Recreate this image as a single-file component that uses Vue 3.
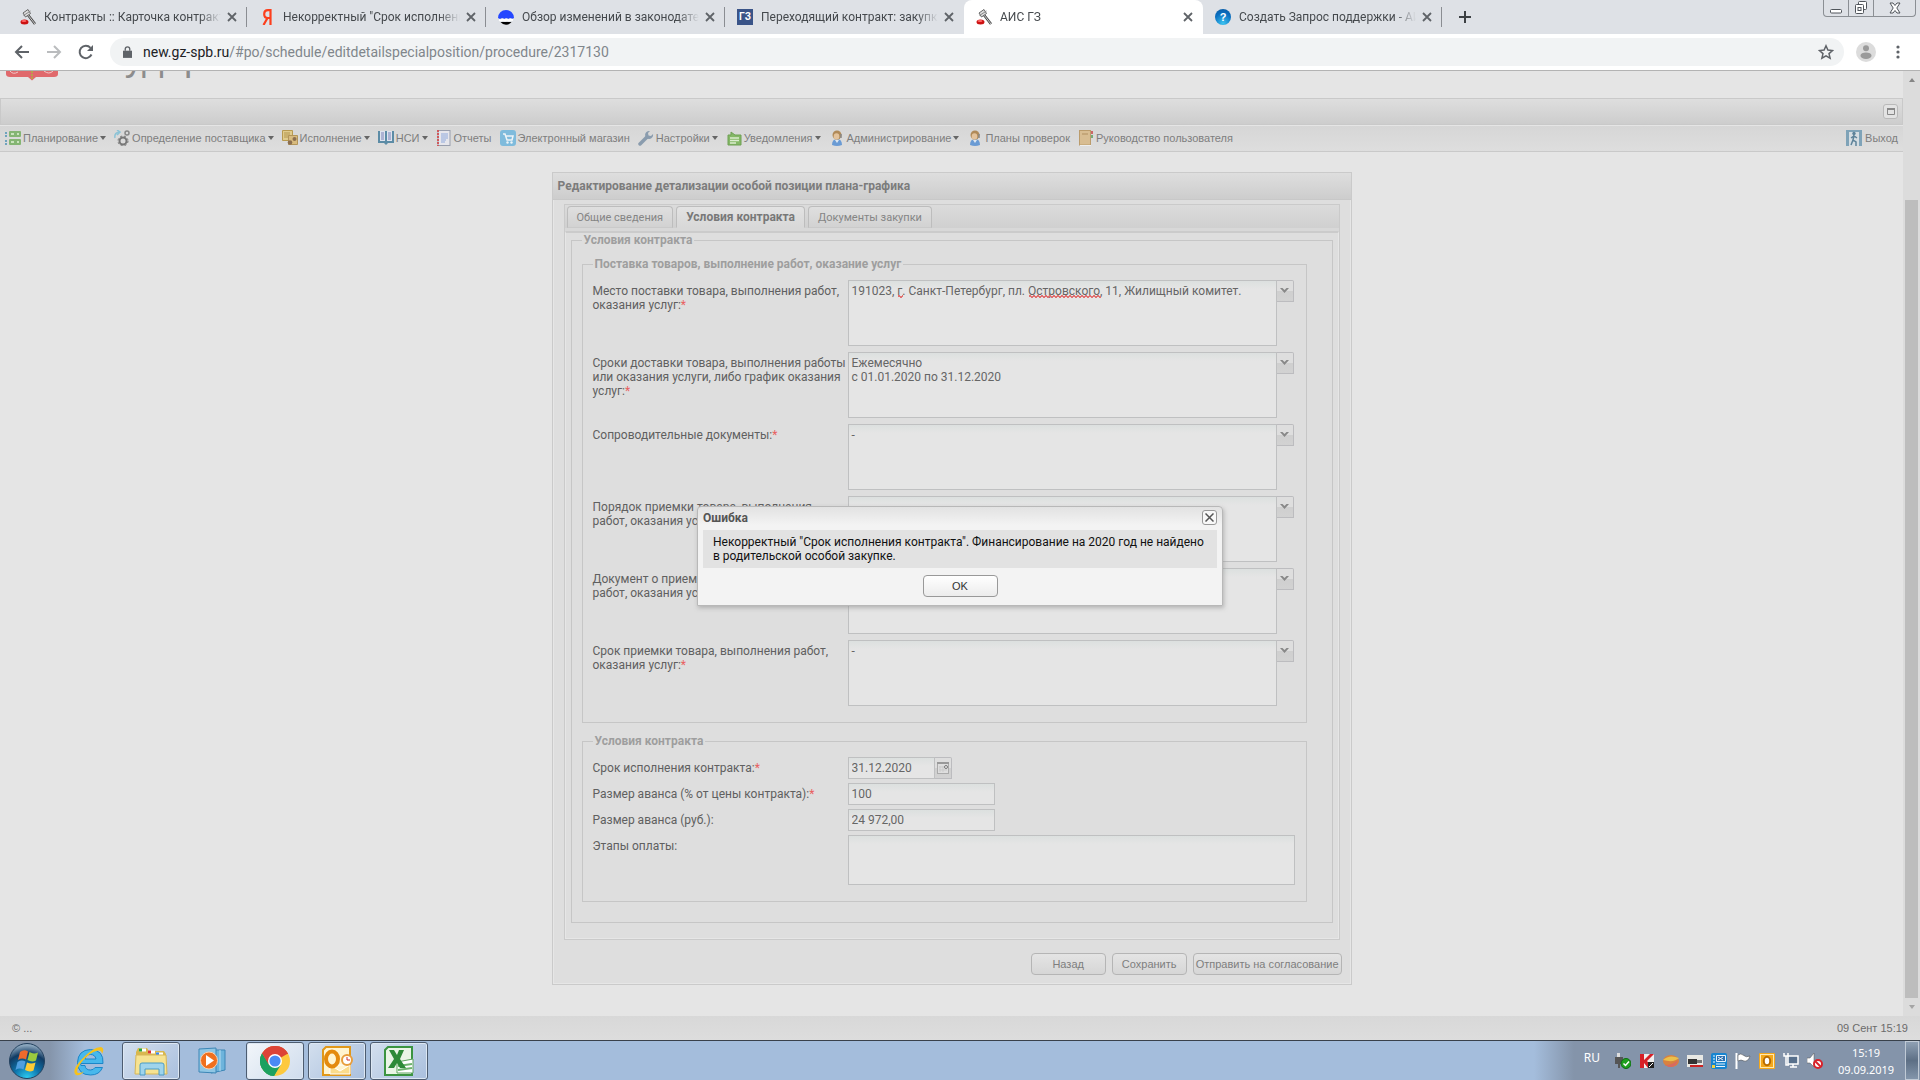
<script setup>
import { ref, onMounted } from 'vue'

const browserTabs = [
  { icon: 'gavel', title: 'Контракты :: Карточка контракта' },
  { icon: 'yandex', title: 'Некорректный "Срок исполнени' },
  { icon: 'globe', title: 'Обзор изменений в законодате' },
  { icon: 'gz', title: 'Переходящий контракт: закупки' },
  { icon: 'gavel', title: 'АИС ГЗ', active: true },
  { icon: 'help', title: 'Создать Запрос поддержки - АИ' },
]

const menu = [
  { icon: 'plan', text: 'Планирование', drop: true },
  { icon: 'gears', text: 'Определение поставщика', drop: true },
  { icon: 'exec', text: 'Исполнение', drop: true },
  { icon: 'book', text: 'НСИ', drop: true },
  { icon: 'report', text: 'Отчеты' },
  { icon: 'shop', text: 'Электронный магазин' },
  { icon: 'wrench', text: 'Настройки', drop: true },
  { icon: 'notify', text: 'Уведомления', drop: true },
  { icon: 'user', text: 'Администрирование', drop: true },
  { icon: 'user', text: 'Планы проверок' },
  { icon: 'manual', text: 'Руководство пользователя' },
]

const delivery = ref([
  { label: 'Место поставки товара, выполнения работ,\nоказания услуг:', value: '191023, г. Санкт-Петербург, пл. Островского, 11, Жилищный комитет.', typos: ['г', 'Островского'] },
  { label: 'Сроки доставки товара, выполнения работы\nили оказания услуги, либо график оказания\nуслуг:', value: 'Ежемесячно\nс 01.01.2020 по 31.12.2020' },
  { label: 'Сопроводительные документы:', value: '-' },
  { label: 'Порядок приемки товара, выполнения\nработ, оказания услуг:', value: '-' },
  { label: 'Документ о приемке товара, выполнения\nработ, оказания услуг:', value: '-' },
  { label: 'Срок приемки товара, выполнения работ,\nоказания услуг:', value: '-' },
])

const endDate = ref('31.12.2020')
const percent = ref('100')
const amount = ref('24 972,00')
const stages = ref('')

const typoMarks = ref([])
onMounted(() => {
  const area = document.getElementById('delivery-0')
  const ctx = document.createElement('canvas').getContext('2d')
  const style = getComputedStyle(area)
  ctx.font = `${style.fontSize} ${style.fontFamily}`
  const { value, typos } = delivery.value[0]
  typoMarks.value = typos.map((word) => ({
    left: 4 + Math.round(ctx.measureText(value.slice(0, value.indexOf(word))).width),
    width: Math.round(ctx.measureText(word).width),
  }))
})
</script>

<template>
  <div class="screen">
    <header class="chrome">
      <div class="tabstrip">
        <div v-for="(t, i) in browserTabs" :key="i" class="btab" :class="{ active: t.active, plain: i === 3 || i === 4 }">
          <svg v-if="t.icon === 'gavel'" class="i16" viewBox="0 0 16 16">
            <path d="M8 6l7 9" stroke="#444" stroke-width="2.500" />
            <path d="M8 6l7 9" stroke="#ccc" />
            <path d="M3 4l5-3.500 2.500 4L5.500 8z" fill="#ddd" stroke="#666" />
            <path d="M3.500 6.500l7-4.500" stroke="#888" />
            <ellipse cx="4.500" cy="13" rx="4" ry="2.500" fill="#c11" />
            <ellipse cx="4" cy="12" rx="2.500" ry="1" fill="#f66" />
          </svg>
          <svg v-else-if="t.icon === 'yandex'" class="i16" viewBox="0 0 16 16">
            <path d="M11.500 0v16M11.500 1.200H9C6.500 1.200 5.200 3 5.200 5.200S6.800 9 9 9h2.500M8.500 9L4.500 16" fill="none" stroke="#fc3f1d" stroke-width="2.200" />
          </svg>
          <svg v-else-if="t.icon === 'globe'" class="i16" viewBox="0 0 16 16">
            <path d="M0 9a8 8 0 1 1 16 0l-2 1-2-1-2 1-2-1-2 1-2-1-2 1z" fill="#2447ff" />
            <path d="M1 11l2 .5 2-1 2 1 2-1 2 1 2-1 2 .5" stroke="#fff" stroke-width="2" fill="none" />
            <path d="M2.500 13h11a7 7 0 0 1-11 0z" fill="#000" />
          </svg>
          <span v-else-if="t.icon === 'gz'" class="gz" aria-hidden="true">ГЗ</span>
          <span v-else class="help" aria-hidden="true">?</span>
          <span class="btitle">{{ t.title }}</span>
          <button class="bclose" aria-label="Закрыть вкладку">
            <svg viewBox="0 0 10 10"><path d="M1 1l8 8M9 1L1 9" stroke="#5f6368" stroke-width="1.800" /></svg>
          </button>
        </div>
        <button class="newtab" aria-label="Новая вкладка">
          <svg viewBox="0 0 12 12"><path d="M6 0v12M0 6h12" stroke="#3c4043" stroke-width="2" /></svg>
        </button>
        <div class="winctl">
          <button aria-label="Свернуть"><svg width="14" height="14" viewBox="0 0 14 14"><rect x="1.500" y="8.500" width="11" height="3.500" rx="1" fill="#fff" stroke="#50555b" /></svg></button>
          <button aria-label="Восстановить"><svg width="14" height="14" viewBox="0 0 14 14"><rect x="4.500" y=".5" width="8" height="8" rx="1" fill="#fff" stroke="#50555b" /><rect x="1.500" y="3.500" width="8" height="9" rx="1" fill="#fff" stroke="#50555b" /><rect x="4" y="6.500" width="3" height="3" fill="#fff" stroke="#50555b" /></svg></button>
          <button aria-label="Закрыть"><svg width="14" height="12" viewBox="0 0 14 12"><path d="M2 1h3l2 2.500L9 1h3L8.800 6 12 11H9L7 8.500 5 11H2l3.200-5z" fill="#fff" stroke="#50555b" /></svg></button>
        </div>
      </div>
      <div class="toolbar">
        <button class="nav" aria-label="Назад по истории"><svg viewBox="0 0 16 16"><path d="M15 8H2M8 2L2 8l6 6" fill="none" stroke="#5f6368" stroke-width="2" /></svg></button>
        <button class="nav" aria-label="Вперед"><svg viewBox="0 0 16 16"><path d="M1 8h13M8 2l6 6-6 6" fill="none" stroke="#babcbe" stroke-width="2" /></svg></button>
        <button class="nav" aria-label="Обновить"><svg viewBox="0 0 16 16"><path d="M13.500 10.500A6.200 6.200 0 1 1 12.500 3.800" fill="none" stroke="#5f6368" stroke-width="2" /><path d="M15 1v6H9z" fill="#5f6368" /></svg></button>
        <div class="omni">
          <svg class="lock" viewBox="0 0 10 14"><path d="M0 5h10v8H0z" fill="#5f6368" /><path d="M2.500 5V3.200a2.500 2.500 0 0 1 5 0V5" fill="none" stroke="#5f6368" stroke-width="1.500" /></svg>
          <span class="url"><b>new.gz-spb.ru</b>/#po/schedule/editdetailspecialposition/procedure/2317130</span>
          <svg class="star" viewBox="0 0 16 16"><path d="M8 1.800l1.900 4.300 4.600.4-3.500 3.100 1.100 4.600L8 11.800l-4.100 2.400L5 9.600 1.500 6.500l4.600-.4z" fill="none" stroke="#5f6368" stroke-width="1.500" /></svg>
        </div>
        <svg class="avatar" viewBox="0 0 20 20"><circle cx="10" cy="10" r="10" fill="#dcdcdc" /><circle cx="10" cy="6.300" r="3" fill="#9a9a9a" /><ellipse cx="10" cy="13.700" rx="5.500" ry="3.300" fill="#9a9a9a" /></svg>
        <svg class="dots" viewBox="0 0 4 14"><circle cx="2" cy="2" r="1.600" /><circle cx="2" cy="7" r="1.600" /><circle cx="2" cy="12" r="1.600" /></svg>
      </div>
    </header>

    <div class="content">
      <div class="viewport">
        <div class="page">
          <div class="brand">
            <svg width="52" height="10" viewBox="0 0 52 10"><path d="M0 0h52v3q0 3-4 3H30l-4 3.500L22 6H4Q0 6 0 3z" fill="#e0696c" /><path d="M4 0q3 4 8 1M38 0q5 4 9 0" stroke="#f2c9c9" fill="none" /><path d="M26 0v8" stroke="#b9a24a" stroke-width="2" stroke-dasharray="2 1" /></svg>
            <h1>Государственный заказ</h1>
          </div>
          <div class="north">
            <button aria-label="Развернуть"><svg width="8" height="7" viewBox="0 0 8 7"><path d="M.5.5h7v6h-7z" fill="none" stroke="#888" /><path d="M0 1h8" stroke="#888" stroke-width="2" /></svg></button>
          </div>
          <nav class="menubar">
            <button v-for="m in menu" :key="m.text" class="mitem">
              <svg class="i16" viewBox="0 0 16 16">
                <g v-if="m.icon === 'plan'"><rect x="4" y="1" width="12" height="6" rx="1" fill="#84b573" /><rect x="4" y="9" width="12" height="6" rx="1" fill="#84b573" /><path d="M6 4h3M12 4h2M6 12h3M12 12h2" stroke="#c9e3bd" stroke-width="2" /><path d="M0 3h2M0 6h2M0 11h2M0 14h2" stroke="#6fa3bd" stroke-width="2" /></g>
                <g v-else-if="m.icon === 'gears'" fill="none"><circle cx="9" cy="11" r="3.500" stroke="#777" stroke-width="2" /><circle cx="9" cy="11" r="5" stroke="#777" stroke-dasharray="2 2" /><circle cx="13" cy="3" r="2" stroke="#888" stroke-width="1.500" /><path d="M1 8Q0 3 5 2M3 0l3 2-3 3" stroke="#8cc3d6" stroke-width="1.500" /></g>
                <g v-else-if="m.icon === 'exec'"><path d="M.5.5h10v10H.5z" fill="#e0cb8c" stroke="#b89a50" /><path d="M2 3h6M2 5h6M2 7h4" stroke="#b3954c" /><path d="M6.500 5.500h9v9h-9z" fill="#d8bb7e" stroke="#b3955a" /><circle cx="8" cy="12.500" r="2.300" fill="#8c6f50" /><circle cx="12.500" cy="9" r="2" fill="#8c6f50" /></g>
                <g v-else-if="m.icon === 'book'"><path d="M0 1h16v12H10L8 15 6 13H0z" fill="#5c8ca6" /><path d="M2 1h5v10H2zM9 1h5v10H9z" fill="#dfe3ee" /><path d="M3 3h3M3 5h3M3 7h3M3 9h3M10 3h3M10 5h3M10 7h3M10 9h3" stroke="#7a82b8" /></g>
                <g v-else-if="m.icon === 'report'"><rect x="2" y=".5" width="12" height="15" fill="#e6e6ec" stroke="#999fae" /><path d="M2 0v16" stroke="#d0595c" stroke-width="2" stroke-dasharray="2 1" /><path d="M5 4h7M5 6h7M5 8h7M5 10h5M5 12h4" stroke="#8fa9dc" /></g>
                <g v-else-if="m.icon === 'shop'"><rect width="16" height="16" rx="3" fill="#7fbbdc" /><path d="M3 4h2l2 6h5l1-4H6" fill="none" stroke="#eef4f7" stroke-width="1.500" /><circle cx="7.500" cy="12.500" r="1.200" fill="#eef4f7" /><circle cx="11.500" cy="12.500" r="1.200" fill="#eef4f7" /></g>
                <g v-else-if="m.icon === 'wrench'"><path d="M2 14L9 7" stroke="#8a9cae" stroke-width="3.500" stroke-linecap="round" /><path d="M12 1a4 4 0 1 0 3 3l-2 2-2.500-.5L10 3z" fill="#8a9cae" /></g>
                <g v-else-if="m.icon === 'notify'"><path d="M2 5h3V2l4 3h6v10H2z" fill="#84b866" stroke="#6fa055" /><path d="M4 8h9M4 10.500h9M4 13h6" stroke="#dcecd0" stroke-width="1.300" /></g>
                <g v-else-if="m.icon === 'user'"><path d="M3 15q0-6 5-6t5 6q-5 2-10 0z" fill="#6a9bd4" /><path d="M6 10l2 3 2-3z" fill="#dfe8f2" /><circle cx="8" cy="5" r="4.500" fill="#b08a58" /><ellipse cx="7.500" cy="6.500" rx="2.800" ry="3.200" fill="#e3c39c" /><path d="M12 4v4" stroke="#888" stroke-width="1.500" /></g>
                <g v-else><rect x="1.500" y=".5" width="11" height="14.500" fill="#d8bd92" stroke="#bb9c6c" /><path d="M4 4h6" stroke="#b08f60" /><path d="M2 15.500h11" stroke="#eee" /><path d="M14 1v3" stroke="#c66" stroke-width="2" /><path d="M14 5v3" stroke="#7a7" stroke-width="2" /></g>
              </svg>
              <span>{{ m.text }}</span>
              <i v-if="m.drop" class="caret"></i>
            </button>
            <button class="mitem exit">
              <svg class="i16" viewBox="0 0 16 16"><rect width="16" height="16" fill="#7fa3b8" /><path d="M3 2h10v14H3z" fill="#d5dde2" /><circle cx="8" cy="3.500" r="1.700" fill="#5d8299" /><path d="M8 5L7 10l3 2v4M7 10l-2 5M5 8l3-2 3 2" stroke="#5d8299" stroke-width="1.500" fill="none" /></svg>
              <span>Выход</span>
            </button>
          </nav>

          <main class="panel">
            <h2>Редактирование детализации особой позиции плана-графика</h2>
            <form class="pbody" @submit.prevent>
              <div class="frame">
                <div class="tabs" role="tablist">
                  <button type="button" role="tab">Общие сведения</button>
                  <button type="button" role="tab" class="on">Условия контракта</button>
                  <button type="button" role="tab">Документы закупки</button>
                </div>
                <div class="fbody">
                  <fieldset class="outer">
                    <legend>Условия контракта</legend>
                    <fieldset class="inner">
                      <legend>Поставка товаров, выполнение работ, оказание услуг</legend>
                      <div v-for="(f, i) in delivery" :key="i" class="row">
                        <label :for="'delivery-' + i">{{ f.label }}<em>*</em></label>
                        <div class="combo">
                          <textarea :id="'delivery-' + i" v-model="f.value" spellcheck="false"></textarea>
                          <template v-if="f.typos">
                            <i v-for="(m, k) in typoMarks" :key="k" class="typo" :style="{ left: m.left + 'px', width: m.width + 'px' }"></i>
                          </template>
                          <button type="button" class="trigger" aria-label="Выбрать"><svg width="9" height="6" viewBox="0 0 9 6"><path d="M0 0h2.500l2 2 2-2H9L4.500 5z" fill="#888" /></svg></button>
                        </div>
                      </div>
                    </fieldset>
                    <fieldset class="inner second">
                      <legend>Условия контракта</legend>
                      <div class="row">
                        <label for="end-date">Срок исполнения контракта:<em>*</em></label>
                        <div class="combo date">
                          <input id="end-date" v-model="endDate" type="text">
                          <button type="button" class="trigger" aria-label="Календарь"><svg width="12" height="12" viewBox="0 0 12 12"><rect x=".5" y=".5" width="11" height="11" fill="#dedede" stroke="#aaa" /><path d="M0 1h12" stroke="#999" stroke-width="2" /><path d="M3 4v6M6 4v6M2 5h6M2 8h8" stroke="#cbcbcb" /><circle cx="9" cy="5" r="1.500" fill="#eee" stroke="#777" /></svg></button>
                        </div>
                      </div>
                      <div class="row">
                        <label for="percent">Размер аванса (% от цены контракта):<em>*</em></label>
                        <input id="percent" v-model="percent" class="short" type="text">
                      </div>
                      <div class="row">
                        <label for="amount">Размер аванса (руб.):</label>
                        <input id="amount" v-model="amount" class="short" type="text">
                      </div>
                      <div class="row">
                        <label for="stages">Этапы оплаты:</label>
                        <textarea id="stages" v-model="stages" class="stages"></textarea>
                      </div>
                    </fieldset>
                  </fieldset>
                </div>
              </div>
              <div class="actions">
                <button type="button">Назад</button>
                <button type="button">Сохранить</button>
                <button type="button">Отправить на согласование</button>
              </div>
            </form>
          </main>
        </div>
        <div class="scroll" aria-hidden="true"><i class="up"></i><span class="thumb"></span><i class="down"></i></div>
      </div>

      <footer class="status"><span>© ...</span><span>09 Сент 15:19</span></footer>

      <section class="dialog" role="alertdialog" aria-labelledby="dlg-title">
        <div class="dhead">
          <h3 id="dlg-title">Ошибка</h3>
          <button aria-label="Закрыть окно"><svg width="9" height="9" viewBox="0 0 9 9"><path d="M.5.5l8 8M8.500.5l-8 8" stroke="#555" stroke-width="1.500" /></svg></button>
        </div>
        <p>Некорректный "Срок исполнения контракта". Финансирование на 2020 год не найдено<br>в родительской особой закупке.</p>
        <button class="ok">OK</button>
      </section>
    </div>

    <div class="taskbar">
      <button class="orb" aria-label="Пуск">
        <svg width="36" height="36" viewBox="0 0 36 36">
          <defs><radialGradient id="orbfill" cx=".5" cy="1" r=".95"><stop offset="0" stop-color="#2fd0f5" /><stop offset=".4" stop-color="#0d74ab" /><stop offset=".75" stop-color="#123b63" /><stop offset="1" stop-color="#8ba6bd" /></radialGradient></defs>
          <circle cx="18" cy="18" r="17.500" fill="url(#orbfill)" stroke="#24425f" />
          <path d="M11 9q4-3 8-.5l-2 8q-4-2-8 .5z" fill="#ee6a2c" /><path d="M20.500 9q4 2.500 8.500.5l-2 8q-4 2-8.500-.5z" fill="#9bca3e" /><path d="M8.500 19q4-2.500 8-.5l-2 8q-4-2-8 .5z" fill="#4f9fe0" /><path d="M18 19.500q4 2 8.500 0l-2 8q-4 2-8.500-.5z" fill="#fccb35" />
        </svg>
      </button>
      <button class="task" aria-label="Internet Explorer">
        <svg width="32" height="32" viewBox="0 0 32 32"><path d="M7.500 18.500H30Q31 5 17.500 4.500 5 5 4.500 17.500 5 30 17.500 30 26.500 30 29.500 22.500H22q-1.500 2.500-4.500 2.500-5 0-5.500-4.500H8zM12 14q1-4.500 5.500-4.500T23 14z" fill="#48b8ec" stroke="#1c86c8" fill-rule="evenodd" /><path d="M3 30Q-2 26 8 15 20 2 28 2q4 1 1 7 0-4-4-3.500Q17 7 9 16.500 2 26 5 28q2 .5 6-1.500-5 5-8 3.500z" fill="#f6c21c" /></svg>
      </button>
      <button class="task open" aria-label="Проводник">
        <svg width="34" height="32" viewBox="0 0 34 32"><path d="M2 7l2-4h9l2 3h15l2 3v20H2z" fill="#d9b84e" /><path d="M5 5h7M14 7h7M22 9h7" stroke="#fff" stroke-width="3" /><path d="M5 5h3" stroke="#2ca53c" stroke-width="3" /><path d="M14 7h3" stroke="#d33" stroke-width="3" /><path d="M22 9h3" stroke="#38f" stroke-width="3" /><path d="M2 10h30l1 19H1z" fill="#f6e392" stroke="#d6b658" /><path d="M6 30V20q0-2 2-2h20q2 0 2 2v10h-5v-6H11v6z" fill="#9fd4ec" stroke="#4b9cc6" /></svg>
      </button>
      <button class="task" aria-label="Проигрыватель">
        <svg width="32" height="28" viewBox="0 0 32 28"><path d="M14 3h14v20l-14 3z" fill="#6eb4dc" stroke="#3c86b6" /><path d="M18 3v22M23 3v21" stroke="#b9def0" /><path d="M2 2l17-1v25L2 25z" fill="#8fc6e4" stroke="#3c86b6" /><circle cx="12" cy="13.500" r="8.500" fill="#f0701e" stroke="#fbd0ae" /><path d="M9 8l8 5.500L9 19z" fill="#fff" /></svg>
      </button>
      <button class="task open current" aria-label="Chrome">
        <svg width="30" height="30" viewBox="0 0 30 30"><circle cx="15" cy="15" r="15" fill="#fdc93e" /><path d="M15 15L2 7.500A15 15 0 0 1 28 7.500z" fill="#dc4437" /><path d="M2 7.500A15 15 0 0 0 14 30L21 18.500 15 22 9 18.500z" fill="#1da160" /><path d="M15 8h13q-4-8-13-8Q7 0 2 7.500l6.500 11z" fill="#dc4437" /><path d="M2 7.500L8.500 18.500 14 21l5-1-5 10A15 15 0 0 1 2 7.500z" fill="#1da160" /><circle cx="15" cy="15" r="7" fill="#fff" /><circle cx="15" cy="15" r="5.600" fill="#4a8af4" /></svg>
      </button>
      <button class="task open" aria-label="Outlook">
        <svg width="32" height="32" viewBox="0 0 32 32"><path d="M5 2h24v28H2V5z" fill="#fff4d0" stroke="#e0981a" stroke-width="2" /><path d="M9 20h20v9H9zM9 20l10 6 10-6" fill="#fbdc8c" stroke="#fff" /><ellipse cx="11" cy="14" rx="6" ry="7.500" fill="none" stroke="#e48a0e" stroke-width="4" /><circle cx="26" cy="15" r="5" fill="#fff" stroke="#e89d3c" stroke-width="2" /><path d="M26 12v3h3" fill="none" stroke="#c33" /></svg>
      </button>
      <button class="task open" aria-label="Excel">
        <svg width="32" height="32" viewBox="0 0 32 32"><path d="M5 2h24v28H2V5z" fill="#eaf5e6" stroke="#3b9440" stroke-width="2" /><path d="M14 17l16-3v14H14z" fill="#fff" stroke="#5ca35c" /><path d="M15 21l14-2M15 25l14-2" stroke="#6db36d" stroke-width="2" /><path d="M6 5h5l3 5 2-5h5l-4 9 6 9h-6l-3-5-3 5H5l6-9z" fill="#2e8a38" /></svg>
      </button>
      <div class="tray">
        <span class="lang">RU</span>
        <div class="ticons">
          <svg viewBox="0 0 16 16"><path d="M2 0h3v4H2z" fill="#ddd" /><path d="M0 4h8v7H5v4H3v-4H0z" fill="#555" /><circle cx="11" cy="10.500" r="5" fill="#1fa01f" stroke="#0d6d12" /><path d="M8.500 10.500l2 2 3.500-4" stroke="#fff" stroke-width="1.500" fill="none" /></svg>
          <svg viewBox="0 0 16 16"><path d="M1 1h14v14H1z" fill="#eee" /><path d="M1 1h4v6l6-6h4L8 8l6 7H9L5 10v5H1z" fill="#d61f26" /><path d="M9 9h6v6H9z" fill="#222" /><path d="M10 14l4-4" stroke="#fff" /></svg>
          <svg viewBox="0 0 16 16"><ellipse cx="8" cy="8" rx="8" ry="6" fill="#d9823f" /><path d="M0 7q6-6 16-2-5 5-16 2z" fill="#eac04c" /><path d="M2 12q8 0 13-5-2 8-9 7z" fill="#d86a60" /></svg>
          <svg viewBox="0 0 16 16"><path d="M0 2h16v12H0z" fill="#e8e8e4" /><path d="M1 6h9v5H1z" fill="#333" /><path d="M10 7h5v3h-5z" fill="#777" /><path d="M3 13h13" stroke="#c22" stroke-width="2" /></svg>
          <svg viewBox="0 0 16 16"><rect width="16" height="16" rx="2" fill="#1785d0" /><path d="M5.500 2.500h9v6h-9z" fill="#2d6fae" stroke="#eaf5fc" /><path d="M7 4l5 3M12 4L7 7M2 3h2M2 6h2M2 9h2M5 11h9M5 13.500h9" stroke="#eaf5fc" /><path d="M1 12h3v3H1z" fill="#f0d040" /></svg>
          <svg viewBox="0 0 16 16"><path d="M1.500 0v16" stroke="#fff" stroke-width="2" /><path d="M3 2q3-2 5 0 3 3 7 1-2 6-6 5-3-2-6 0z" fill="#fff" stroke="#444" stroke-width=".5" /></svg>
          <svg viewBox="0 0 16 16"><rect width="16" height="16" rx="1" fill="#f4a81c" /><rect x="1.500" y="1.500" width="13" height="13" fill="none" stroke="#ffe9b0" /><ellipse cx="8" cy="8" rx="3.200" ry="4.200" fill="#fff" stroke="#b86c00" stroke-width="2" /></svg>
          <svg viewBox="0 0 16 16"><path d="M5 3h10v8H5z" fill="#58708c" stroke="#fff" stroke-width="1.500" /><path d="M7 14h7M10 11v3" stroke="#fff" stroke-width="1.500" /><path d="M1 0v3h4V0M3 3v9h3" stroke="#fff" stroke-width="1.500" fill="none" /></svg>
          <svg viewBox="0 0 16 16"><path d="M0 5h3l4-5v14L3 10H0z" fill="#fff" stroke="#555" stroke-width=".5" /><circle cx="11" cy="11" r="4" fill="#fff" stroke="#d8222a" stroke-width="2" /><path d="M8 8l6 6" stroke="#d8222a" stroke-width="2" /></svg>
        </div>
        <div class="clock"><span>15:19</span><span>09.09.2019</span></div>
        <button class="peek" aria-label="Показать рабочий стол"></button>
      </div>
    </div>
  </div>
</template>

<style>
body { margin: 0; background: #e5e5e5; }
</style>

<style scoped>
* { box-sizing: border-box; }
button { font: inherit; color: inherit; margin: 0; padding: 0; border: 0; background: none; display: flex; align-items: center; justify-content: center; white-space: nowrap; }
h1, h2, h3, p { margin: 0; }
.screen { display: flex; flex-direction: column; min-height: 100vh; overflow: hidden; font-family: Roboto, sans-serif; font-size: 12px; }
.i16 { width: 16px; height: 16px; flex: none; }

.chrome { background: #dee1e6; }
.tabstrip { display: flex; height: 34px; padding-left: 8px; align-items: stretch; color: #45494d; }
.btab { display: flex; align-items: center; width: 239px; padding: 0 10px 0 12px; background: linear-gradient(#8a8d92, #8a8d92) right 7px / 1px 20px no-repeat; }
.btab.plain { background-image: none; }
.btab.active { background: #fff; border-radius: 8px 8px 0 0; }
.btitle { flex: 1; margin: 0 6px 0 8px; overflow: hidden; white-space: nowrap; mask-image: linear-gradient(to right, #000 88%, transparent); }
.bclose svg { width: 10px; height: 10px; }
.bclose { width: 10px; }
.gz { width: 16px; height: 16px; background: #3a5488; color: #fff; font: bold 10px/16px "Liberation Sans", sans-serif; text-align: center; }
.help { width: 16px; height: 16px; border-radius: 50%; background: radial-gradient(circle at 50% 90%, #3cc3f0, #0a6fc0 60%, #0a58a0); color: #fff; font: bold 11px/16px "Liberation Sans", sans-serif; text-align: center; }
.newtab { margin-left: 17px; width: 12px; }
.newtab svg { width: 12px; height: 12px; }
.winctl { display: flex; margin-left: auto; margin-right: 4px; height: 17px; border: 1px solid #8b8f94; border-top: 0; border-radius: 0 0 4px 4px; }
.winctl button { width: 25px; border-right: 1px solid #8b8f94; }
.winctl button:last-child { width: 41px; border: 0; }
.toolbar { display: flex; align-items: center; height: 37px; padding: 0 20px 0 14px; background: #fff; border-bottom: 1px solid #b3b3b3; }
.nav { width: 16px; height: 16px; margin-right: 16px; }
.nav svg { width: 16px; height: 16px; }
.omni { flex: 1; display: flex; align-items: center; height: 28px; margin-right: 12px; padding: 0 10px 0 13px; border-radius: 14px; background: #f1f3f4; font-size: 14px; color: #80868b; }
.omni b { font-weight: 400; color: #202124; }
.lock { width: 9px; height: 13px; margin-right: 11px; }
.url { flex: 1; }
.star { width: 16px; height: 16px; }
.avatar { width: 20px; height: 20px; margin-right: 20px; }
.dots { width: 4px; height: 14px; fill: #5f6368; }

.content { position: relative; flex: 1; display: flex; flex-direction: column; }
.viewport { flex: 1; display: flex; background: #e5e5e5; }
.page { flex: 1; min-width: 0; display: flex; flex-direction: column; }
.brand { display: flex; height: 27px; padding-left: 6px; overflow: hidden; }
.brand h1 { margin: -32px 0 0 10px; font: 37px/38px "Liberation Sans", sans-serif; color: #8c8c8c; }
.north { display: flex; align-items: center; justify-content: flex-end; height: 27px; padding-right: 4px; border: 1px solid #c9c9c9; background: linear-gradient(#dedede, #cdcdcd); }
.north button { width: 15px; height: 15px; border: 1px solid #b9b9b9; border-radius: 3px; background: #e3e3e3; }
.menubar { display: flex; align-items: center; gap: 8px; height: 27px; padding: 0 5px 1px; border-top: 1px solid #e5e5e5; border-bottom: 1px solid #c9c9c9; background: linear-gradient(#d6d6d6, #dedede); font-family: "Liberation Sans", sans-serif; font-size: 11px; color: #7e7e7e; }
.mitem { gap: 2px; }
.caret { border: 3px solid transparent; border-top: 4px solid #666; border-bottom: 0; }
.exit { margin-left: auto; gap: 3px; }

.panel { align-self: center; width: 800px; margin: 20px 0 31px; border: 1px solid #cacaca; background: #dedede; color: #606060; }
.panel h2 { height: 27px; padding: 0 5px; border-bottom: 1px solid #c8c8c8; background: linear-gradient(#dedede, #cdcdcd); font-size: 12px; line-height: 27px; color: #7c7c7c; }
.pbody { padding: 4px 10px 8px; border: 1px solid #e6e6e6; border-top: 0; }
.frame { border: 1px solid #cacaca; }
.tabs { display: flex; gap: 3px; height: 26px; padding: 1px 2px 0; background: linear-gradient(#dbdbdb, #d0d0d0); border-bottom: 3px solid #d8d8d8; }
.tabs button { height: 22px; padding: 0 9px; border: 1px solid #bdbdbd; border-bottom: 1px solid #cacaca; border-radius: 4px 4px 0 0; background: linear-gradient(#dfdfdf, #d2d2d2); font-size: 11px; color: #858585; }
.tabs .on { background: linear-gradient(#e3e3e3, #d8d8d8); border-bottom-color: #d8d8d8; font-weight: bold; font-size: 12px; color: #787878; }
.fbody { padding: 0 5px 15px 5px; border: 1px solid #e6e6e6; border-top: 2px solid #cbcbcb; }
fieldset { min-width: 0; margin: 0; border: 1px solid #c6c6c6; }
legend { padding: 0 2px; font-weight: bold; font-size: 12px; line-height: 14px; color: #9e9e9e; }
.outer { padding: 10px 25px 20px 10px; }
.inner { display: flex; flex-direction: column; padding: 9px 11px 16px 10px; }
.second { margin-top: 11px; }
.row { display: flex; align-items: flex-start; margin-bottom: 6px; }
.second .row { margin-bottom: 4px; }
.row:last-child { margin-bottom: 0; }
.second .row:last-child { margin-bottom: 0; }
label { flex: none; width: 255px; padding-top: 4px; line-height: 14px; white-space: pre; }
label em { font-style: normal; color: #e96060; }
.combo { position: relative; flex: 1; display: flex; align-items: flex-start; margin-right: 1px; }
textarea, input { display: block; margin: 0; border: 1px solid #bfc0c1; border-radius: 0; outline: 0; resize: none; background: linear-gradient(#dce0df, #e5e5e5 8px); color: #666; font: 12px/14px Roboto, sans-serif; padding: 3px; }
.combo textarea { flex: 1; height: 66px; }
input { height: 22px; }
.date { flex: none; width: 104px; }
.date input { flex: 1; min-width: 0; }
.short { width: 147px; }
.stages { flex: 1; height: 50px; }
.trigger { width: 17px; height: 22px; border: 1px solid #bcbcbf; border-left: 0; border-radius: 0 2px 0 0; background: linear-gradient(#dedede 50%, #cfcfcf 50%, #d2d2d2); }
.typo { position: absolute; top: 15px; height: 3px; background: radial-gradient(circle at 1px 1px, #e07070 1px, transparent 1px) 0 0 / 4px 3px, radial-gradient(circle at 3px 2px, #e07070 1px, transparent 1px) 0 0 / 4px 3px; }
.actions { display: flex; justify-content: flex-end; gap: 6px; margin: 13px -2px 0 0; font-family: "Liberation Sans", sans-serif; font-size: 11px; color: #7e7e7e; }
.actions button { min-width: 75px; height: 22px; padding: 0 2px; border: 1px solid #b5b5b5; border-radius: 4px; background: linear-gradient(#e4e4e4, #d6d6d6); }

.scroll { display: flex; flex-direction: column; align-items: center; width: 17px; background: #dcdcdc; }
.up { margin-top: 7px; border: 3px solid transparent; border-top: 0; border-bottom: 4px solid #858585; }
.thumb { width: 13px; flex: 1; margin: 118px 0 7px; background: #bdbdbd; }
.down { margin-bottom: 7px; border: 3px solid transparent; border-bottom: 0; border-top: 4px solid #a5a5a5; }

.dialog { position: absolute; top: 50%; left: 50%; transform: translate(-50%, -50%); display: flex; flex-direction: column; width: 526px; padding: 0 5px 8px; border: 1px solid #b8b8b8; border-radius: 4px 4px 0 0; background: linear-gradient(#e2e2e2, #f3f3f3 18px); box-shadow: 1px 2px 4px #8888; color: #111; }
.dhead { display: flex; align-items: center; justify-content: space-between; height: 23px; padding-bottom: 1px; }
.dhead h3 { font-size: 12px; color: #555; }
.dhead button { width: 15px; height: 15px; border: 1px solid #999; border-radius: 3px; background: #f8f8f8; }
.dialog p { height: 38px; padding: 5px 10px; background: #e2e2e2; line-height: 14px; white-space: nowrap; }
.ok { align-self: center; width: 75px; height: 22px; margin-top: 7px; border: 1px solid #999; border-radius: 4px; background: linear-gradient(#fff, #ececec); color: #333; font: 11px "Liberation Sans", sans-serif; }

.status { display: flex; align-items: center; justify-content: space-between; height: 24px; padding: 0 12px 1px; background: linear-gradient(#d8d8d8, #dddddd); font-family: "Liberation Sans", sans-serif; font-size: 11px; color: #6b6b6b; }
.taskbar { display: flex; align-items: center; height: 40px; padding-left: 9px; border-top: 1px solid #39414b; background: linear-gradient(to right, #8595ab 50px, #a4bddc 85px); }
.orb { width: 36px; margin-right: 11px; }
.task { width: 58px; height: 38px; margin-left: 4px; }
.task.open { border: 1px solid #4d5c70; border-radius: 3px; box-shadow: inset 0 0 0 1px #dce7f3; background: linear-gradient(135deg, #d3dfee, #a9bfdd); }
.task.current { background: linear-gradient(135deg, #f2f6fa, #cfdced); }
.tray { align-self: stretch; display: flex; align-items: center; margin-left: auto; padding-left: 50px; background: linear-gradient(to right, #a4bddc, #8494aa 40px); color: #fff; font-family: "Noto Sans", sans-serif; font-size: 11px; }
.lang { margin: -6px 15px 0 0; font-size: 12px; }
.ticons { display: flex; gap: 8px; }
.ticons svg { width: 16px; height: 16px; }
.clock { display: flex; flex-direction: column; align-items: center; width: 82px; padding-left: 4px; line-height: 17px; }
.peek { width: 14px; height: 39px; margin-right: 1px; border: 1px solid #c0cad6; background: linear-gradient(#8fa0b4, #5d6f85 50%, #8395ab); }
</style>
